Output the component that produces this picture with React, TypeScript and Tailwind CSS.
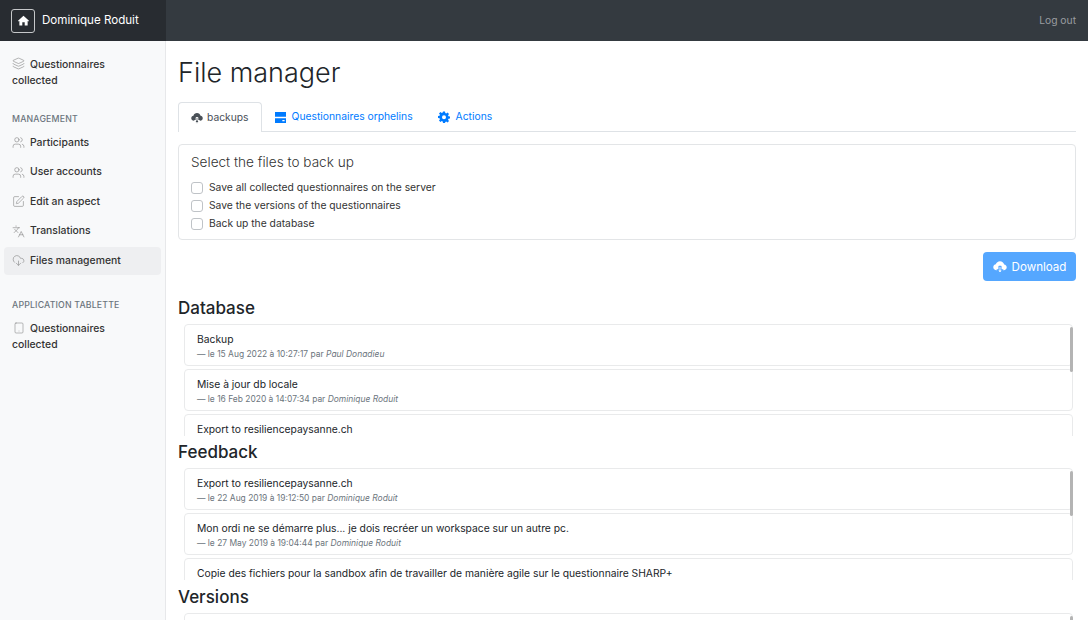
import React from "react";
import { Layers, Users, SquarePen, Languages, CloudDownload, Tablet } from "lucide-react";

const font = { fontFamily: "Inter, 'Liberation Sans', sans-serif" };

function CloudFill({ className, cut }: { className?: string; cut: string }) {
  return (
    <svg viewBox="0 0 24 24" className={className}>
      <path
        fill="currentColor"
        d="M6 17.500C2.800 17.500.5 15.300.5 12.400c0-2.600 1.900-4.700 4.400-5C5.800 4.200 8.600 2 12 2c3.500 0 6.400 2.400 7.100 5.600 2.600.3 4.400 2.400 4.400 4.900 0 2.800-2.200 5-5 5z"
      />
      <path stroke={cut} strokeWidth="2" strokeLinejoin="round" fill="currentColor" d="M10.300 11h3.400v6h3.300L12 23l-5-6h3.300z" />
    </svg>
  );
}

function Nav({ icon: Icon, label, active }: { icon: any; label: string; active?: boolean }) {
  return (
    <div className={`mx-1 mb-[2px] flex h-[27.5px] items-center rounded-[4px] pl-2 text-[10.4px] font-medium text-[#333] ${active ? "bg-[#eeeff1]" : ""}`}>
      <Icon className="mr-[5px] h-[13px] w-[13px] text-[#777]" strokeWidth={1} />
      {label}
    </div>
  );
}

function Collected({ icon: Icon, small }: { icon: any; small?: boolean }) {
  return (
    <div className="pl-3 pr-2 text-[10.4px] leading-[16px] font-medium text-[#333]">
      <span className="mr-[5px] inline-flex w-[13px] justify-center align-[-2px]">
        <Icon className={small ? "h-[12px] w-[12px] text-[#777]" : "h-[13px] w-[13px] text-[#777]"} strokeWidth={1} />
      </span>
      Questionnaires
      <br />
      collected
    </div>
  );
}

function Item({ title, meta, by }: { title: string; meta?: string; by?: string }) {
  return (
    <div className="mb-[3px] h-[42px] shrink-0 rounded-[4px] border border-[#e9eaeb] px-3 pt-[6px]">
      <div className="text-[10.3px] leading-[16px] text-[#212529]">{title}</div>
      {meta && (
        <div className="mt-[1px] text-[8.45px] leading-[12px] text-[#6c757d]">
          {meta} <i>{by}</i>
        </div>
      )}
    </div>
  );
}

function FileList({ items }: { items: { t: string; m?: string; b?: string }[] }) {
  return (
    <div className="relative ml-[6px] mr-[3px] h-[112px] overflow-hidden">
      {items.map((i) => (
        <Item key={i.t} title={i.t} meta={i.m} by={i.b} />
      ))}
      <div className="absolute right-0 top-[3px] h-[45px] w-[3px] rounded-sm bg-[#b4b4b4]" />
    </div>
  );
}

function Check({ label }: { label: string }) {
  return (
    <label className="flex h-[18px] items-center text-[10.3px] text-[#333]">
      <span className="mr-[6px] h-[12px] w-[12px] rounded-[3px] border border-[#bfc3c7] bg-white" />
      {label}
    </label>
  );
}

export default function App() {
  return (
    <div className="flex h-[620px] w-[1088px] flex-col overflow-hidden bg-white" style={font}>
      <header className="flex h-[41px] shrink-0 items-center bg-[#343a40]">
        <div className="flex h-full w-[166px] items-center bg-[#282c31] pl-[11px]">
          <span className="flex h-[24px] w-[24px] items-center justify-center rounded-[3px] border border-[#c5c7c9] text-white">
            <svg viewBox="0 0 12 12" className="h-[11px] w-[11px]" fill="currentColor">
              <path fillRule="evenodd" d="M6 .8 12 6.300l-.8.8-.7-.6V11.500H7.300V8H4.700v3.500H1.500V6.500l-.7.6L0 6.300z" />
            </svg>
          </span>
          <span className="ml-[7px] text-[11.6px] text-white">Dominique Roduit</span>
        </div>
        <div className="ml-auto pr-3 text-[10.3px] text-[#9a9da0]">Log out</div>
      </header>
      <div className="flex min-h-0 flex-1">
        <aside className="w-[166px] shrink-0 border-r border-[#e7e8ea] bg-[#f8f9fa] pt-4">
          <Collected icon={Layers} />
          <div className="mb-[4px] mt-[24px] pl-3 text-[8.75px] leading-[12px] font-medium tracking-[0.02em] text-[#6c757d]">MANAGEMENT</div>
          <Nav icon={Users} label="Participants" />
          <Nav icon={Users} label="User accounts" />
          <Nav icon={SquarePen} label="Edit an aspect" />
          <Nav icon={Languages} label="Translations" />
          <Nav icon={CloudDownload} label="Files management" active />
          <div className="mb-[10px] mt-[24px] pl-3 text-[8.75px] leading-[12px] font-medium tracking-[0.02em] text-[#6c757d]">APPLICATION TABLETTE</div>
          <Collected icon={Tablet} small />
        </aside>
        <main className="min-w-0 flex-1 px-3">
          <h1 className="mt-[14px] text-[27px] leading-[36px] font-light text-[#212529]">File manager</h1>
          <div className="mt-[11px] flex h-[30px] border-b border-[#dee2e6] text-[10.3px]">
            <div className="flex h-[30px] items-center rounded-t-[4px] border border-b-0 border-[#dee2e6] bg-white px-3 text-[#495057]">
              <CloudFill className="mr-[4px] h-[12px] w-[12px]" cut="#fff" />
              backups
            </div>
            <div className="ml-[1px] flex items-center px-3 pt-[1px] text-[#007bff]">
              <svg viewBox="0 0 12 12" className="mr-[6px] h-[11px] w-[11px]" fill="currentColor">
                <path d="M0 0h12v5.300H0zM0 6.700h12V12H0zM8 8.700v1.400h2.500V8.700z" fillRule="evenodd" />
              </svg>
              Questionnaires orphelins
            </div>
            <div className="ml-[1px] flex items-center px-3 pt-[1px] text-[#007bff]">
              <svg viewBox="0 0 24 24" className="mr-[6px] h-[12px] w-[12px]" fill="currentColor">
                <path fillRule="evenodd" d="M10 1h4l.6 3.100 1.900.8L19.100 3l2.900 2.900-1.900 2.600.8 1.900L24 11v4l-3.100.6-.8 1.900 1.900 2.600-2.900 2.900-2.600-1.900-1.900.8L14 24h-4l-.6-3.100-1.900-.8L4.900 22 2 19.100l1.900-2.600-.8-1.900L0 14v-4l3.100-.6.8-1.900L2 4.900 4.900 2l2.600 1.900 1.900-.8zM12 8.500a4 4 0 1 0 0 8 4 4 0 0 0 0-8z" />
              </svg>
              Actions
            </div>
          </div>
          <section className="mt-3 h-[96px] rounded-[4px] border border-[#e3e5e7] px-3 pt-[8px]">
            <div className="mb-[8px] text-[13.6px] leading-[18px] font-light text-[#333]">Select the files to back up</div>
            <Check label="Save all collected questionnaires on the server" />
            <Check label="Save the versions of the questionnaires" />
            <Check label="Back up the database" />
          </section>
          <div className="mt-3 flex justify-end">
            <div className="flex h-[29px] w-[93px] items-center justify-center rounded-[4px] bg-[#55a7ff] pt-[3px] text-[11.6px] text-white">
              <CloudFill className="mr-[5px] h-[14px] w-[14px] -translate-y-[1px]" cut="#55a7ff" />
              Download
            </div>
          </div>
          <h2 className="mt-[16px] mb-[5px] text-[17px] leading-[22px] font-medium text-[#212529]">Database</h2>
          <FileList
            items={[
              { t: "Backup", m: "— le 15 Aug 2022 à 10:27:17 par", b: "Paul Donadieu" },
              { t: "Mise à jour db locale", m: "— le 16 Feb 2020 à 14:07:34 par", b: "Dominique Roduit" },
              { t: "Export to resiliencepaysanne.ch" },
            ]}
          />
          <h2 className="mt-[5px] mb-[5px] text-[17px] leading-[22px] font-medium text-[#212529]">Feedback</h2>
          <FileList
            items={[
              { t: "Export to resiliencepaysanne.ch", m: "— le 22 Aug 2019 à 19:12:50 par", b: "Dominique Roduit" },
              { t: "Mon ordi ne se démarre plus... je dois recréer un workspace sur un autre pc.", m: "— le 27 May 2019 à 19:04:44 par", b: "Dominique Roduit" },
              { t: "Copie des fichiers pour la sandbox afin de travailler de manière agile sur le questionnaire SHARP+" },
            ]}
          />
          <h2 className="mt-[6px] mb-[5px] text-[17px] leading-[22px] font-medium text-[#212529]">Versions</h2>
          <FileList items={[{ t: " " }]} />
        </main>
      </div>
    </div>
  );
}
